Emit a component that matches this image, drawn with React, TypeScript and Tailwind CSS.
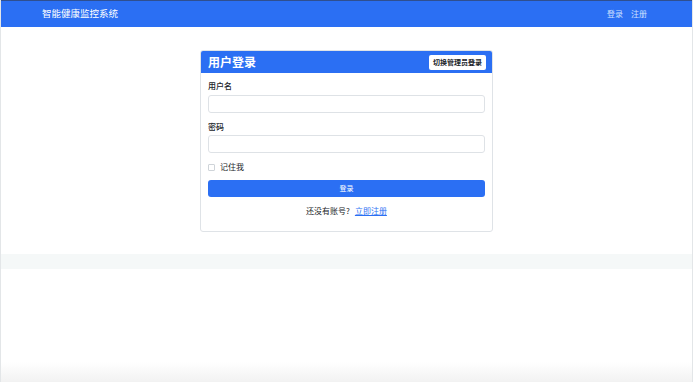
import React from "react";

export default function App() {
  const font = { fontFamily: '"Noto Sans CJK SC", "Noto Sans", sans-serif' };
  return (
    <div className="w-[693px] h-[382px] bg-white flex flex-col overflow-hidden border-x border-[#e3e6e8]" style={font}>
      <nav className="h-[27px] shrink-0 bg-[#2b6ff3] border-t border-[#2f4f8f] flex items-center justify-between pl-[41px] pr-[45px]">
        <span className="text-white text-[9.5px] leading-none">智能健康监控系统</span>
        <div className="flex gap-[8px] text-[8px] text-[#cfe0ff] leading-none">
          <span>登录</span>
          <span>注册</span>
        </div>
      </nav>
      <div className="flex justify-center pt-[23px]">
        <div className="w-[293px] border border-[#dfe3e7] rounded-[3px] overflow-hidden">
          <div className="h-[22px] bg-[#2b6ff3] flex items-center justify-between pl-[7px] pr-[6px]">
            <span className="text-white text-[12px] font-semibold leading-none">用户登录</span>
            <span className="bg-white rounded-[2px] h-[15px] px-[4px] flex items-center text-[7px] font-semibold text-[#212529] leading-none">切换管理员登录</span>
          </div>
          <div className="px-[7px] pt-[8px] pb-[16px] flex flex-col">
            <label className="text-[8px] text-[#212529] leading-[10px] h-[10px] font-medium">用户名</label>
            <div className="mt-[4px] h-[18px] border border-[#dee2e6] rounded-[3px] bg-white" />
            <label className="mt-[9px] text-[8px] text-[#212529] leading-[10px] h-[10px] font-medium">密码</label>
            <div className="mt-[3px] h-[18px] border border-[#dee2e6] rounded-[3px] bg-white" />
            <div className="mt-[9px] flex items-center gap-[5px] h-[10px]">
              <div className="w-[7px] h-[7px] border border-[#cfd4d9] rounded-[1px] bg-white" />
              <span className="text-[8px] text-[#212529] leading-none">记住我</span>
            </div>
            <div className="mt-[8px] h-[17px] bg-[#2b6ff3] rounded-[3px] flex items-center justify-center text-white text-[7px] leading-none">登录</div>
            <div className="mt-[10px] flex justify-center gap-[5px] text-[8px] leading-none">
              <span className="text-[#212529]">还没有账号?</span>
              <span className="text-[#2b6ff3] underline">立即注册</span>
            </div>
          </div>
        </div>
      </div>
      <div className="mt-[22px] h-[15px] bg-[#f5f8f8]" />
      <div className="flex-1 bg-white" />
      <div className="h-[20px] bg-gradient-to-b from-white to-[#f2f2f2]" />
    </div>
  );
}
